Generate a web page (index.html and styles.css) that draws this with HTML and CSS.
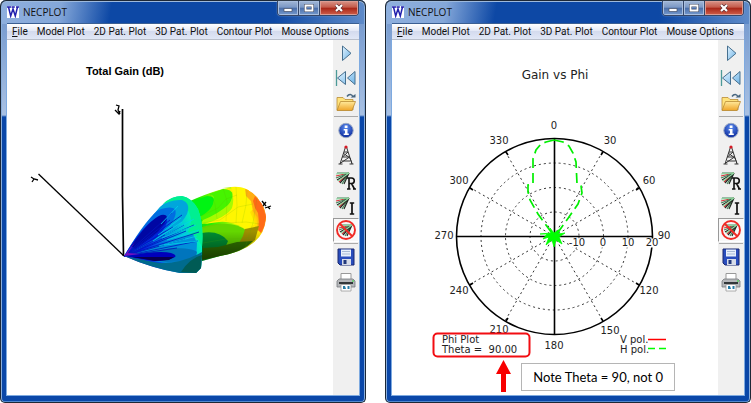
FILE: index.html
```html
<!DOCTYPE html>
<html lang="en">
<head>
<meta charset="utf-8">
<meta name="viewport" content="width=device-width, initial-scale=1">
<title>NECPLOT</title>
<link rel="stylesheet" href="styles.css">
</head>
<body>
<svg class="sprite" aria-hidden="true">
  <defs>
    <linearGradient id="sky" x1="0" y1="0" x2="1" y2="1"><stop offset="0" stop-color="#e2f3ff"/><stop offset="1" stop-color="#6db3e6"/></linearGradient>
    <linearGradient id="gold" x1="0" y1="0" x2="0" y2="1"><stop offset="0" stop-color="#ffe99a"/><stop offset="1" stop-color="#efa52a"/></linearGradient>
    <radialGradient id="ball" cx=".5" cy=".3" r=".7"><stop offset="0" stop-color="#5c8cf0"/><stop offset="1" stop-color="#0b2a9b"/></radialGradient>
  </defs>
  <symbol id="i-play" viewBox="0 0 22 22"><path d="M7.500 4v14.500l8.500-7.200z" fill="url(#sky)" stroke="#47708f"/></symbol>
  <symbol id="i-rewind" viewBox="0 0 22 22"><path d="M1.500 3v16" stroke="#4d9a98" stroke-width="1.300"/><path d="M10.500 4.500v13L2.500 11zM20 4.500v13L12.500 11z" fill="url(#sky)" stroke="#47708f"/></symbol>
  <symbol id="i-open" viewBox="0 0 22 22"><path d="M2 18V5.500h6l2 2h8V18z" fill="#ffe37c" stroke="#b98c35" stroke-width=".8"/><path d="M2 18.500l3.500-9H20.500l-3.500 9z" fill="url(#gold)" stroke="#b98c35" stroke-width=".8"/><path d="M12 4.500c2-3 5-2.500 6 .5" fill="none" stroke="#496781" stroke-width="1.500"/><path d="M15.500 5.500h5V2z" fill="#496781"/></symbol>
  <symbol id="i-info" viewBox="0 0 22 22"><circle cx="11" cy="11.500" r="7.200" fill="url(#ball)" stroke="#9aa9c4"/><path d="M9.700 6.500h2.800V9H9.700zM8.700 10h3.800v4.500h1.300V16H8.700v-1.500H10v-3H8.700z" fill="#fff"/></symbol>
  <symbol id="i-tower" viewBox="0 0 22 22"><path d="M10.500 3L5 20M11.500 3L17 20M9 8h4l-5.500 5h7L5 19.500M8 9l7 5 2 5.500M3.500 20h4M14.500 20h4M7 17h8" fill="none" stroke="#363636"/><circle cx="11" cy="3" r="1.600" fill="#d51924"/></symbol>
  <symbol id="i-fan" viewBox="0 0 22 22"><g fill="none" stroke-width="1.200"><path d="M1 7l13-3M4 13l10-9" stroke="#d83238"/><path d="M1 9l13-5M7 15l7-11M2 4h12" stroke="#43855a"/><path d="M2 11l12-7M9 15l5-11M5 14l9-10" stroke="#232923"/><path d="M1 5l13-1M3 12l11-8" stroke="#8fd7a1"/></g></symbol>
  <symbol id="i-real" viewBox="0 0 22 22"><use href="#i-fan" width="22" height="22"/><path d="M14 9v11M12 9h4.500c3.700 0 3.700 5.500 0 5.500H14m2.500 0l3 5.500M12 20h3.500M18 20h3" fill="none" stroke="#111" stroke-width="1.600"/></symbol>
  <symbol id="i-imag" viewBox="0 0 22 22"><use href="#i-fan" width="22" height="22"/><path d="M17 9v11M14.800 9h4.400M14.800 20h4.400" fill="none" stroke="#111" stroke-width="1.700"/></symbol>
  <symbol id="i-none" viewBox="0 0 22 22"><g transform="translate(3 2)"><use href="#i-fan" width="22" height="22"/></g><circle cx="11" cy="11" r="9" fill="none" stroke="#f02b26" stroke-width="1.900"/><path d="M5 5l12 12" stroke="#f02b26" stroke-width="2"/></symbol>
  <symbol id="i-save" viewBox="0 0 22 22"><path d="M3 3h16v16H5l-2-2z" fill="#294dbc" stroke="#1a2870"/><path d="M6 3.500h10v7H6z" fill="#e9f0fb"/><path d="M7 5.500h8M7 8h8" stroke="#a8bad6"/><path d="M7 13h9v6H7z" fill="#d7dce8"/><path d="M8.500 14h3v4h-3z" fill="#23397b"/></symbol>
  <symbol id="i-print" viewBox="0 0 22 22"><path d="M6 2.500h10V9H6z" fill="#fff" stroke="#999"/><path d="M2 10l2-2h14l2 2v6H2z" fill="#b5b7ba" stroke="#777a7d" stroke-width=".8"/><path d="M4 12h14" stroke="#33373a" stroke-width="2"/><circle cx="18" cy="10" r="1" fill="#5fd166"/><path d="M6 13.500h10V20H6z" fill="#fff" stroke="#999" stroke-width=".8"/><path d="M8 15h2l1 3H8zM12.500 15h2v3h-2z" fill="#267ba5"/></symbol>
  <symbol id="i-w" viewBox="0 0 12 12"><path d="M0 0h12v12H0z" fill="#fff"/><path d="M1.500 1l2.200 9L6 3l2.300 7 2.200-9M0 1h4M4.500 1h3.300M9 1h3" fill="none" stroke="#2321ae" stroke-width="1.500"/></symbol>
</svg>

<main class="desktop">
  <section class="window" aria-label="Three dimensional pattern">
    <header class="titlebar">
      <svg class="app-icon" aria-hidden="true"><use href="#i-w"/></svg>
      <h1 class="title">NECPLOT</h1>
      <div class="controls">
        <button class="control" aria-label="Minimize"><svg viewBox="0 0 20 14"><path d="M6 7.500h8v3H6z" fill="#fff" stroke="#444d65" stroke-width=".7"/></svg></button>
        <button class="control" aria-label="Maximize"><svg viewBox="0 0 20 14"><path d="M6.500 4.500h7v5h-7z" fill="none" stroke="#444d65" stroke-width="3"/><path d="M6.500 4.500h7v5h-7z" fill="none" stroke="#fff" stroke-width="1.800"/></svg></button>
        <button class="control control-close" aria-label="Close"><svg viewBox="0 0 20 14"><path d="M7 4l6 6m0-6l-6 6" stroke="#5b2d32" stroke-width="3.400"/><path d="M7 4l6 6m0-6l-6 6" stroke="#fff" stroke-width="2.200"/></svg></button>
      </div>
    </header>
    <nav class="menubar">
      <button class="menu"><u>F</u>ile</button><button class="menu">Model Plot</button><button class="menu">2D Pat. Plot</button><button class="menu">3D Pat. Plot</button><button class="menu">Contour Plot</button><button class="menu">Mouse Options</button>
    </nav>
    <div class="client">
      <div class="view">
        <svg class="plot" viewBox="7 40 326 355" role="img" aria-label="Total gain">
          <defs>
            <linearGradient id="far" gradientUnits="userSpaceOnUse" x1="190" y1="240" x2="266" y2="208">
              <stop offset="0" stop-color="#00c83a"/><stop offset=".3" stop-color="#22ee00"/><stop offset=".5" stop-color="#8dfa00"/><stop offset=".65" stop-color="#f6f500"/><stop offset=".82" stop-color="#ffe000"/><stop offset=".93" stop-color="#ff8a18"/><stop offset="1" stop-color="#ff4a10"/>
            </linearGradient>
            <linearGradient id="near" gradientUnits="userSpaceOnUse" x1="124" y1="256" x2="204" y2="228">
              <stop offset="0" stop-color="#5a00c8"/><stop offset=".2" stop-color="#0a12e8"/><stop offset=".5" stop-color="#0078e0"/><stop offset=".75" stop-color="#00c8d8"/><stop offset=".9" stop-color="#00f0b8"/><stop offset="1" stop-color="#10f890"/>
            </linearGradient>
            <linearGradient id="shade" x1="0" y1="0" x2="0" y2="1"><stop offset=".6" stop-opacity="0"/><stop offset="1" stop-opacity=".5"/></linearGradient>
          </defs>
          <text class="plot-title" x="86" y="75">Total Gain (dB)</text>
          <g class="axes">
            <path d="M122.500 109v86l1 61" stroke-width="1.700"/>
            <path d="M38.500 174l85.500 82" stroke-width="1.300"/>
            <path d="M31 177l3 2 4 1M34 179l-2 3M116 105l3 1-1 4 2 4M115 110l4 4 1-3M262 201l4 5m-4 1l4-5m-1 6l6-2m-3 1l2 2" stroke-width="1.300"/>
          </g>
          <path d="M190 201Q222 187 236 187 252 188 260 202 266 210 266 218 265 234 253 243 242 252 220 256L202 261z" fill="url(#far)"/>
          <path d="M190 202l17-6q7 0 7 4-1 14-17 18z" fill="#00f413"/>
          <path d="M199 217q15-7 15-19 0-3-5-4l14-5q9 0 10 6-1 11-14 19l-16 7z" fill="#46f400"/>
          <path d="M223 188l9-1q2 12-4 18-10 9-25 15-2 2-1 4 20-2 30-12l14-7-2-16z" fill="#a7fb00"/>
          <path d="M231 187q10-1 17 3l7 6 2 10-7 6 5 12-8 5q-18-9-28-7l-15 2q23-7 28-16 3-10-1-21z" fill="#fff600"/>
          <path d="M248 190l9 7 7 11 2 11-4 13-5-2 1-12-5-7-2-10-5-5-1-7z" fill="#ffae12"/>
          <path d="M255 196l7 8 4 13-2 10-3 6-3-3 1-8-1-9-3-5-2-7z" fill="#ff6a17"/>
          <path d="M202 227q31-8 45 4 0 9-6 16l-21 7-18 4z" fill="#64d700"/>
          <path d="M202 233q17-3 26 8-2 8-14 12l-12 5z" fill="#008d32"/>
          <path d="M245 229l14-3-4 14-12 8-15 4q14-7 17-23z" fill="#9d9000"/>
          <path d="M203 248l15-1 19-5 16-1q-10 11-33 15l-18 4z" fill="#317500"/>
          <path d="M190 201Q222 187 236 187 252 188 260 202 266 210 266 218 265 234 253 243 242 252 220 256L202 261z" fill="url(#shade)"/>
          <g class="mesh"><path d="M202 223l18-3 18-13 15-3M202 228l20-5 24-1 14 2M201 216l17-8 8-9 11-4M210 194l5 10 2 15M223 188l4 13-1 20M236 187l1 18-1 18M247 190l-1 15-4 18M257 198l-4 25-8 25M203 243l23-4 26-1"/></g>
          <path d="M124 256Q153 211 166 202 173 196 182 196 192 198 198 209 204 224 202 247 202 263 201 268L196 273H180Q154 269 124 256z" fill="url(#near)"/>
          <path d="M163 204q8-8 19-8 10 2 16 13 6 15 4 38l-4-8-10-7q5-11 1-20-8-13-26-8z" fill="#00ef91"/>
          <path d="M160 207q10-8 22-7 9 3 5 14-9 17-36 28l-27 14z" fill="#00a6dc"/>
          <path d="M124 256q25-42 37-47 10-3 14 0 4 9-15 27l-25 16z" fill="#006de1"/>
          <path d="M126 253q18-30 33-36 7-1 8 2 1 8-12 20l-24 13z" fill="#0026d9"/>
          <path d="M131 246q18-26 30-31 6-1 6 3-3 9-15 19l-17 12z" fill="#0007a3"/>
          <path d="M124 256l47-14 22-8 4 9-1 17-30 3z" fill="#0091da"/>
          <path d="M124 256l47-8q22 0 26 4l-2 9-28 1z" fill="#0075bd"/>
          <path d="M124 256q36-6 47-3 6 2 4 4-6 4-22 4z" fill="#0000bd"/>
          <path d="M132 257h42l-5 3-14 1z" fill="#080052"/>
          <path d="M124 256l35 7q22 1 43-11l-1 16-5 5h-16q-29-5-56-17z" fill="#006b8d"/>
          <path d="M181 272q9-14 21-17l-1 13-5 5z" fill="#005b55"/>
          <g class="rays"><path d="M124 256l49-29M124 256l60-31M124 256l70-31M124 256l62-25M124 256l75-24M124 256l61-17M124 256l74-15M124 256l53-8M124 256l46-36M124 256l58-41M124 256l48-43"/></g>
          <g class="rays light"><path d="M158 235l23-17M165 235l29-16M162 238l34-13M167 240l32-10M159 246l38-10M153 241l29-19M161 224l17-18M164 245l35-4"/></g>
          <path d="M124 256l11-14-7 11 12 1z" fill="#7510bf"/>
        </svg>
      </div>
      <div class="toolbar">
        <button class="tool" aria-label="Play"><svg><use href="#i-play"/></svg></button>
        <button class="tool" aria-label="Rewind"><svg><use href="#i-rewind"/></svg></button>
        <button class="tool" aria-label="Open"><svg><use href="#i-open"/></svg></button>
        <hr class="rule">
        <button class="tool" aria-label="Information"><svg><use href="#i-info"/></svg></button>
        <button class="tool" aria-label="Antenna"><svg><use href="#i-tower"/></svg></button>
        <button class="tool" aria-label="Real currents"><svg><use href="#i-real"/></svg></button>
        <button class="tool" aria-label="Imaginary currents"><svg><use href="#i-imag"/></svg></button>
        <button class="tool tool-active" aria-label="No currents" aria-pressed="true"><svg><use href="#i-none"/></svg></button>
        <hr class="rule">
        <button class="tool" aria-label="Save"><svg><use href="#i-save"/></svg></button>
        <button class="tool" aria-label="Print"><svg><use href="#i-print"/></svg></button>
      </div>
    </div>
  </section>

  <section class="window" aria-label="Polar pattern">
    <header class="titlebar">
      <svg class="app-icon" aria-hidden="true"><use href="#i-w"/></svg>
      <h1 class="title">NECPLOT</h1>
      <div class="controls">
        <button class="control" aria-label="Minimize"><svg viewBox="0 0 20 14"><path d="M6 7.500h8v3H6z" fill="#fff" stroke="#444d65" stroke-width=".7"/></svg></button>
        <button class="control" aria-label="Maximize"><svg viewBox="0 0 20 14"><path d="M6.500 4.500h7v5h-7z" fill="none" stroke="#444d65" stroke-width="3"/><path d="M6.500 4.500h7v5h-7z" fill="none" stroke="#fff" stroke-width="1.800"/></svg></button>
        <button class="control control-close" aria-label="Close"><svg viewBox="0 0 20 14"><path d="M7 4l6 6m0-6l-6 6" stroke="#5b2d32" stroke-width="3.400"/><path d="M7 4l6 6m0-6l-6 6" stroke="#fff" stroke-width="2.200"/></svg></button>
      </div>
    </header>
    <nav class="menubar">
      <button class="menu"><u>F</u>ile</button><button class="menu">Model Plot</button><button class="menu">2D Pat. Plot</button><button class="menu">3D Pat. Plot</button><button class="menu">Contour Plot</button><button class="menu">Mouse Options</button>
    </nav>
    <div class="client">
      <div class="view">
        <svg class="plot" viewBox="392 40 326 355" role="img" aria-label="Gain versus phi">
          <text class="label label-heading" x="555" y="79" text-anchor="middle">Gain vs Phi</text>
          <g class="grid">
            <circle cx="554.500" cy="236.500" r="24.500"/><circle cx="554.500" cy="236.500" r="49"/><circle cx="554.500" cy="236.500" r="73.500"/>
            <path d="M554 236l49-85M554 236l85-49M554 236l85 49M554 236l49 85M554 236l-49 85M554 236l-85 49M554 236l-85-49M554 236l-49-85"/>
          </g>
          <g class="frame">
            <circle cx="554.500" cy="236.500" r="98"/>
            <path d="M456 236.500h197M554.500 138v197"/>
            <path d="M603 152l-2 3M639 188l-3 2M639 285l-3-2M603 321l-2-3M506 321l2-3M470 285l3-2M470 188l3 2M506 152l2 3"/>
          </g>
          <path d="M570 238.500h18v9h-18zM599 238.500h9v9h-9zM621 238.500h14v9h-14zM645 238.500h15v9h-15z" fill="#fff"/>
          <g class="label" text-anchor="middle">
            <text x="554" y="129">0</text><text x="610" y="144">30</text><text x="649" y="184">60</text><text x="664" y="239">90</text>
            <text x="649" y="294">120</text><text x="610" y="334">150</text><text x="554" y="349">180</text><text x="499" y="333">210</text>
            <text x="459" y="294">240</text><text x="444" y="239">270</text><text x="459" y="184">300</text><text x="499" y="144">330</text>
            <text x="577" y="246">-10</text><text x="603" y="246">0</text><text x="628" y="246">10</text><text x="652" y="246">20</text>
          </g>
          <path class="lobe" d="M554 140l-8 2-5 2-5 6-3 9v25l-5 1v7l2 8 8 14 16 22"/>
          <path class="lobe" d="M554 140l9 2 6 4 4 7 3 9 1 22 4 2 1 7-4 11-9 13-15 21"/>
          <path d="M540 234l11-1-1-5 4 5 6-4-2 5 7-1-6 4 3 7-6-4-2 7-2-7-6 5 3-8-6 2 4-5z" fill="#0f0" stroke="#0f0" stroke-width=".8"/>
          <g class="label"><text x="442" y="343">Phi Plot</text><text x="442" y="353" xml:space="preserve">Theta =  90.00</text><text x="620" y="343">V pol.</text><text x="620" y="353">H pol.</text></g>
          <path d="M648 339.500h18" stroke="#f00" stroke-width="1.500"/><path d="M648 348.500h7m4 0h7" stroke="#0f0" stroke-width="1.500"/>
          <rect x="433.500" y="333.500" width="96" height="23" rx="4" fill="none" stroke="#f20d12" stroke-width="2"/>
          <path d="M503.500 360l7.500 14h-5v18h-5v-18h-5z" fill="#f80000"/>
        </svg>
        <p class="callout">Note Theta = 90, not 0</p>
      </div>
      <div class="toolbar">
        <button class="tool" aria-label="Play"><svg><use href="#i-play"/></svg></button>
        <button class="tool" aria-label="Rewind"><svg><use href="#i-rewind"/></svg></button>
        <button class="tool" aria-label="Open"><svg><use href="#i-open"/></svg></button>
        <hr class="rule">
        <button class="tool" aria-label="Information"><svg><use href="#i-info"/></svg></button>
        <button class="tool" aria-label="Antenna"><svg><use href="#i-tower"/></svg></button>
        <button class="tool" aria-label="Real currents"><svg><use href="#i-real"/></svg></button>
        <button class="tool" aria-label="Imaginary currents"><svg><use href="#i-imag"/></svg></button>
        <button class="tool tool-active" aria-label="No currents" aria-pressed="true"><svg><use href="#i-none"/></svg></button>
        <hr class="rule">
        <button class="tool" aria-label="Save"><svg><use href="#i-save"/></svg></button>
        <button class="tool" aria-label="Print"><svg><use href="#i-print"/></svg></button>
      </div>
    </div>
  </section>
</main>
</body>
</html>
```

FILE: styles.css
```css
* { box-sizing: border-box; }

body {
  margin: 0;
  background: #fff;
  color: #111;
  font-family: Roboto, "Open Sans", sans-serif;
  font-size: 10px;
}

button {
  margin: 0;
  padding: 0;
  border: 0;
  background: none;
  color: inherit;
  font: inherit;
}

.sprite { position: absolute; width: 0; height: 0; }

.desktop { display: flex; align-items: flex-start; gap: 19px; }

.window {
  flex: 1;
  min-width: 0;
  padding: 0 6px 7px;
  border: 1px solid #1d2836;
  border-top: 0;
  border-radius: 6px 6px 5px 5px;
  background:
    linear-gradient(100deg, #8fb0de 0, #84a7d9 60px, transparent 110px) 0 0 / 100% 24px no-repeat,
    linear-gradient(90deg, transparent 75%, #5f8bc9) 0 0 / 100% 24px no-repeat,
    linear-gradient(#0d48a5, #0d48a5) 0 0 / 100% 24px no-repeat,
    linear-gradient(#6d93cb 0, #a9c1e3 115px, #0a47a8 117px);
  box-shadow: inset 0 1px #1d2836, inset 0 2px #9db9dc, inset 1px 0 #8aaedb, inset -1px 0 #8aaedb, inset 0 -1px #5187cd;
}

.titlebar { display: flex; align-items: flex-start; height: 24px; }
.app-icon { width: 12px; height: 12px; margin-top: 6px; }
.title { flex: 1; margin: 5px 0 0 4px; font: 10px/14px "Open Sans", sans-serif; }

.controls {
  display: flex;
  height: 15px;
  margin-top: 1px;
  border: 1px solid #35476a;
  border-top: 0;
  border-radius: 0 0 4px 4px;
  overflow: hidden;
  box-shadow: 0 0 1px #d5e3f6;
}
.control {
  width: 21px;
  border-right: 1px solid #35476a;
  background: linear-gradient(#a2b7d6, #7b98c5 45%, #4a6ea9 50%, #7599cd);
  box-shadow: inset 0 0 0 1px #a9bfdf;
}
.control svg { display: block; width: 20px; height: 14px; margin: auto; }
.control-close {
  width: 38px;
  border: 0;
  background: linear-gradient(#d89488, #c45a4a 45%, #a82517 50%, #d0604b);
  box-shadow: inset 0 0 0 1px #dc9c92;
}

.menubar {
  display: flex;
  gap: 9px;
  height: 16px;
  padding-left: 5px;
  background: linear-gradient(#fff, #e4e9f6 45%, #d4dbee 50%, #e1e7f6);
  box-shadow: 0 -1px #3b5f92;
  border-bottom: 1px solid #b9bfcb;
}
.menu { line-height: 15px; white-space: nowrap; }
.menu u { text-underline-offset: 1px; }

.client { display: flex; background: #fff; box-shadow: 0 0 0 1px #7eaae0; clip-path: inset(0 -1px -1px -1px); }
.view { position: relative; flex: 1; min-width: 0; }
.plot { display: block; width: 100%; height: auto; }

.toolbar {
  display: flex;
  flex-direction: column;
  gap: 1px;
  width: 26px;
  padding-top: 1px;
  background: #f0f0f0;
}
.tool { display: grid; place-items: center; height: 24px; border: 1px solid transparent; }
.tool svg { width: 22px; height: 22px; }
.tool-active { background: #f8f8f8; border-color: #999 #fff #fff #999; }
.rule { width: 24px; height: 1px; margin: 0 auto; border: 0; background: #aaa; }

.plot-title { font: bold 11px "Liberation Sans", Arial, sans-serif; }
.label { font: 10px "DejaVu Sans", Verdana, sans-serif; fill: #222; }
.label-heading { font-size: 12px; }

.axes { fill: none; stroke: #000; }
.mesh { fill: none; stroke: #5aa600; stroke-width: .5; opacity: .3; }
.rays { fill: none; stroke: #0015bc; stroke-width: .8; }
.light { stroke: #00d2e8; }

.grid { fill: none; stroke: #333; stroke-dasharray: 2 3; }
.frame { fill: none; stroke: #000; stroke-width: 1.600; }
.lobe { fill: none; stroke: #00ee00; stroke-width: 1.700; stroke-dasharray: 10 5; }

.callout {
  position: absolute;
  right: 43px;
  bottom: 4px;
  margin: 0;
  padding: 0 11px;
  border: 1px solid #b5b5b5;
  background: #fff;
  color: #000;
  font: 13px/26px Lato, "Open Sans", sans-serif;
  white-space: nowrap;
}
```
